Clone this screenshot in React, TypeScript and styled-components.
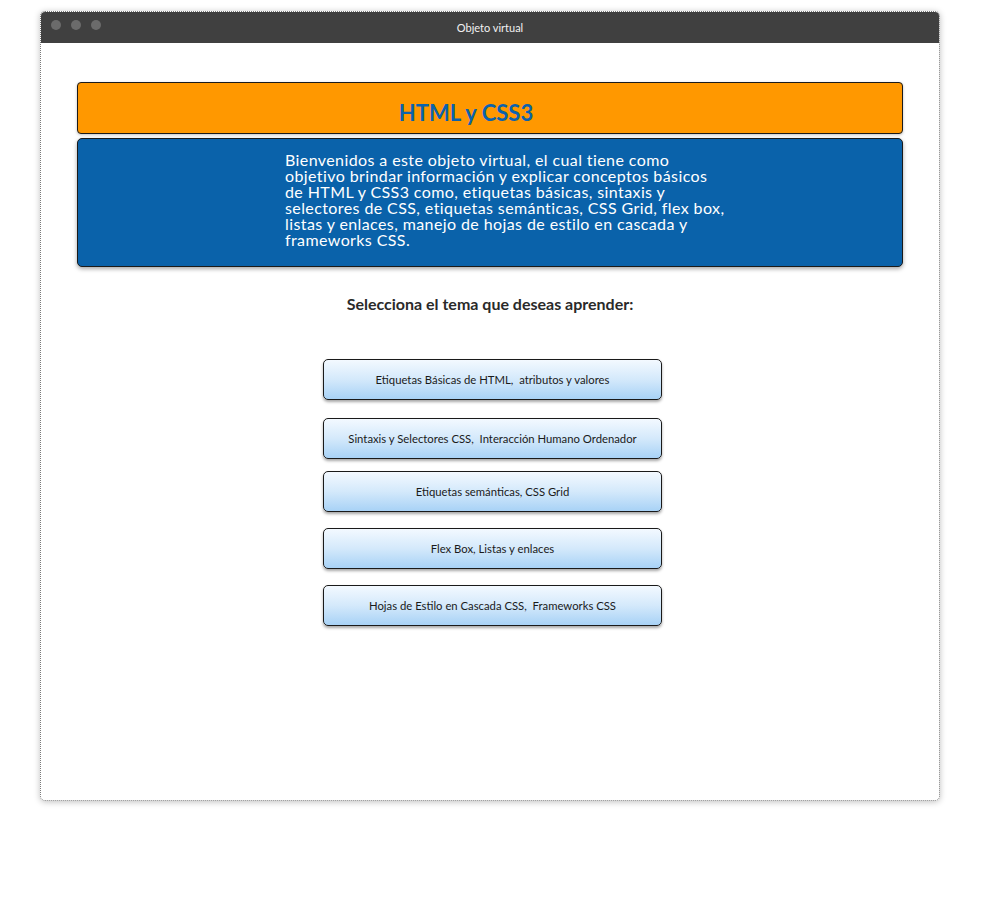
import styled, { createGlobalStyle } from "styled-components";

const GlobalStyle = createGlobalStyle`
  body {
    margin: 0;
    background: #ffffff;
    font-family: Lato, "Open Sans", sans-serif;
  }
`;

const Page = styled.div`
  padding: 11px 0 0 40px;
  height: 889px;
`;

const Window = styled.div`
  width: 898px;
  height: 788px;
  border: 1px dotted #7a7a7a;
  border-radius: 5px;
  box-shadow: 0 1px 6px rgba(0, 0, 0, 0.25);
  background: #fff;
  overflow: hidden;
  display: flex;
  flex-direction: column;
`;

const TitleBar = styled.div`
  height: 31px;
  background: #404040;
  position: relative;
  display: flex;
  align-items: center;
  justify-content: center;
  flex-shrink: 0;
`;

const Dots = styled.div`
  position: absolute;
  left: 10px;
  top: 8px;
  display: flex;
  gap: 10px;
`;

const Dot = styled.span`
  width: 10px;
  height: 10px;
  border-radius: 50%;
  background: #6b6b6b;
`;

const WindowTitle = styled.span`
  color: #f2f2f2;
  font-size: 11px;
`;

const Content = styled.div`
  padding: 39px 36px 0 36px;
  display: flex;
  flex-direction: column;
`;

const Banner = styled.div`
  height: 52px;
  background: #ff9800;
  border: 1px solid #1a1a1a;
  border-radius: 4px;
  box-shadow: 0 1px 3px rgba(0, 0, 0, 0.25);
  display: flex;
  justify-content: center;
  padding: 16px 48px 0 0;
  box-sizing: border-box;
`;

const BannerTitle = styled.h1`
  margin: 0;
  font-size: 22px;
  font-weight: 700;
  color: #0b62ad;
  line-height: 28px;
`;

const Intro = styled.div`
  margin-top: 4px;
  height: 129px;
  box-sizing: border-box;
  background: #0a62aa;
  border: 1px solid #1a1a1a;
  border-radius: 5px;
  box-shadow: 0 2px 4px rgba(0, 0, 0, 0.35);
  padding: 13px 0 0 207px;
`;

const IntroText = styled.p`
  margin: 0;
  color: #ffffff;
  font-size: 16px;
  letter-spacing: 0.4px;
  line-height: 16px;
  white-space: nowrap;
`;

const Prompt = styled.h2`
  margin: 27px 0 0;
  text-align: center;
  font-size: 16px;
  font-weight: 700;
  color: #2a2a2a;
`;

const Topics = styled.div`
  margin: 46px 0 0 246px;
  display: flex;
  flex-direction: column;
`;

const TopicButton = styled.button<{ $gap: number }>`
  margin-top: ${({ $gap }) => $gap}px;
  width: 339px;
  height: 41px;
  border: 1px solid #1a1a1a;
  border-radius: 5px;
  background: linear-gradient(to bottom, #f3f9ff 0%, #d4e9fb 50%, #a8d2f6 100%);
  box-shadow: 0 2px 3px rgba(0, 0, 0, 0.35);
  font-family: Lato, "Open Sans", sans-serif;
  font-size: 11.3px;
  color: #1a1a1a;
  cursor: pointer;
  white-space: pre;
`;

const introLines = [
  "Bienvenidos a este objeto virtual, el cual tiene como",
  "objetivo brindar información y explicar conceptos básicos",
  "de HTML y CSS3 como, etiquetas básicas, sintaxis y",
  "selectores de CSS, etiquetas semánticas, CSS Grid, flex box,",
  "listas y enlaces, manejo de hojas de estilo en cascada y",
  "frameworks CSS.",
];

const topics = [
  { label: "Etiquetas Básicas de HTML,  atributos y valores", gap: 0 },
  { label: "Sintaxis y Selectores CSS,  Interacción Humano Ordenador", gap: 18 },
  { label: "Etiquetas semánticas, CSS Grid", gap: 12 },
  { label: "Flex Box, Listas y enlaces", gap: 16 },
  { label: "Hojas de Estilo en Cascada CSS,  Frameworks CSS", gap: 16 },
];

export default function App() {
  return (
    <>
      <GlobalStyle />
      <Page>
        <Window>
          <TitleBar>
            <Dots>
              <Dot />
              <Dot />
              <Dot />
            </Dots>
            <WindowTitle>Objeto virtual</WindowTitle>
          </TitleBar>
          <Content>
            <Banner>
              <BannerTitle>HTML y CSS3</BannerTitle>
            </Banner>
            <Intro>
              <IntroText>
                {introLines.map((line, i) => (
                  <span key={i}>
                    {line}
                    {i < introLines.length - 1 && <br />}
                  </span>
                ))}
              </IntroText>
            </Intro>
            <Prompt>Selecciona el tema que deseas aprender:</Prompt>
            <Topics>
              {topics.map((t) => (
                <TopicButton key={t.label} $gap={t.gap}>
                  {t.label}
                </TopicButton>
              ))}
            </Topics>
          </Content>
        </Window>
      </Page>
    </>
  );
}
